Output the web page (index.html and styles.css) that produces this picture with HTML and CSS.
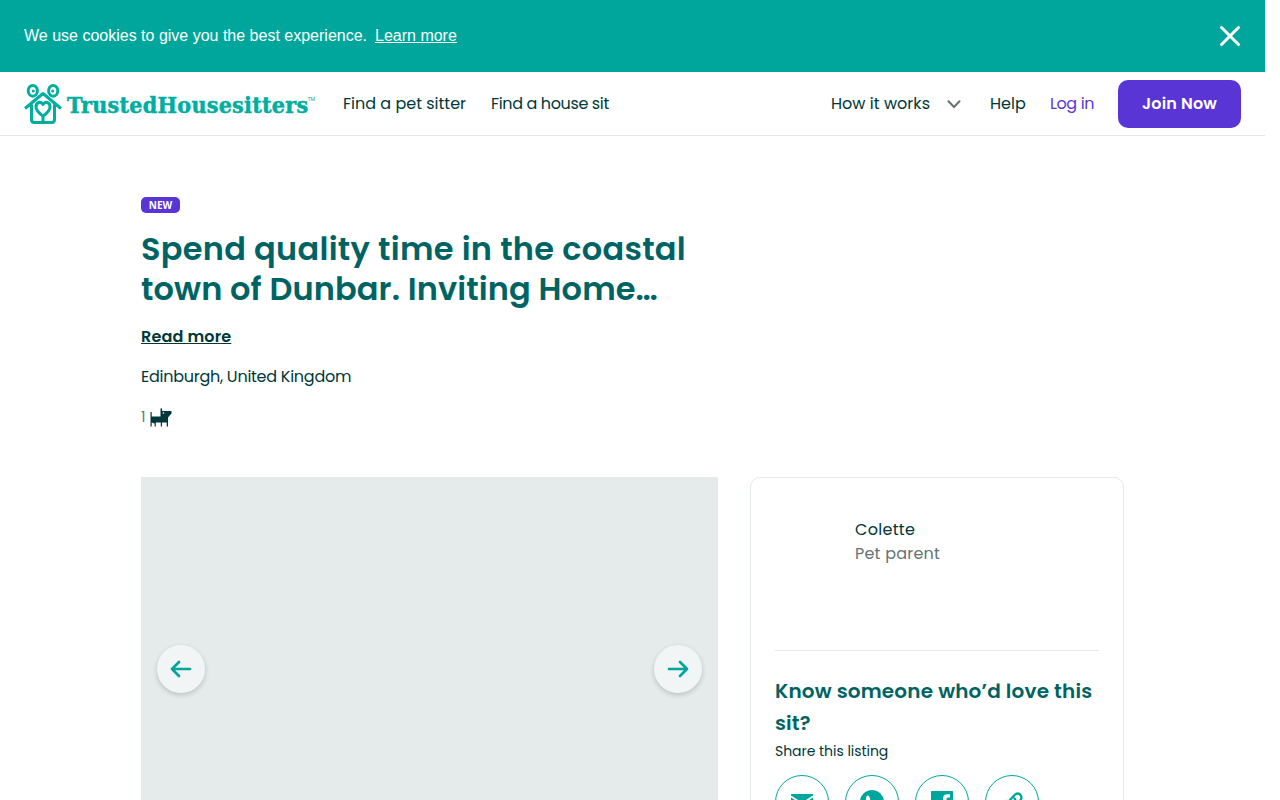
FILE: index.html
```html
<!DOCTYPE html>
<html lang="en">
<head>
<meta charset="utf-8">
<title>TrustedHousesitters</title>
<link rel="stylesheet" href="styles.css">
</head>
<body>
<div class="page">
  <div class="cookie">
    <p class="cookie-text">We use cookies to give you the best experience.<a class="cookie-link">Learn more</a></p>
    <svg class="cookie-close" width="22" height="22" viewBox="0 0 22 22"><path d="M2.5 2.5l17 17M19.5 2.5l-17 17"/></svg>
  </div>
  <header class="header">
    <div class="logo">
      <svg class="logo-mark" width="40" height="42" viewBox="0 0 40 42">
        <ellipse cx="9.800" cy="8.800" rx="4.600" ry="5.400"/><ellipse cx="30.200" cy="8.800" rx="4.600" ry="5.400"/>
        <path d="M2 26.500L20 11.500 38 26.500M8.500 22.500V37.500q0 3 3 3H28.500q3 0 3-3V22.500M20 40V34M20 34C15.500 31 13 28 13 24.800C13 20 18 19 20 22.500C22 19 27 20 27 24.800C27 28 24.500 31 20 34Z"/>
        <circle class="logo-eye" cx="10.300" cy="9" r="1.500"/><circle class="logo-eye" cx="29.700" cy="9" r="1.500"/>
      </svg>
      <span class="logo-name">TrustedHousesitters</span><span class="logo-tm">TM</span>
    </div>
    <nav class="nav nav-left"><a class="t-sitter">Find a pet sitter</a><a class="t-house">Find a house sit</a></nav>
    <nav class="nav nav-right">
      <a class="t-how">How it works</a>
      <svg class="chevron" width="14" height="9" viewBox="0 0 14 9"><path d="M1.500 1.300L7 7 12.500 1.300"/></svg>
      <a class="t-help">Help</a><a class="t-login">Log in</a>
      <button class="join"><span>Join Now</span></button>
    </nav>
  </header>
  <main class="main">
    <span class="badge">NEW</span>
    <h1 class="title"><span class="title-a">Spend quality time in the coastal</span><br><span class="title-b">town of Dunbar. Inviting Home…</span></h1>
    <a class="more">Read more</a>
    <p class="place">Edinburgh, United Kingdom</p>
    <div class="pets"><span>1</span>
      <svg width="22" height="20" viewBox="0 0 22 20"><path d="M.5 4H1.700V8.500H10.500V.5L11.500 0 12.300 3H21.500V5.500L18 9.500V18.500H16.700V14.500H12V18.500H10.800V14.500H5.800V18.500H4.600V15.500L1.700 14.500V18.500H.5Z"/><circle class="pet-eye" cx="13.500" cy="5" r=".8"/></svg>
    </div>
    <div class="columns">
      <section class="gallery">
        <button class="arrow"><svg width="22" height="18" viewBox="0 0 22 18"><path d="M20 9H2M9 2L2 9L9 16"/></svg></button>
        <button class="arrow"><svg width="22" height="18" viewBox="0 0 22 18"><path d="M2 9H20M13 2L20 9L13 16"/></svg></button>
      </section>
      <aside class="card">
        <div class="owner"><span class="owner-name">Colette</span><span class="owner-role">Pet parent</span></div>
        <h2 class="share-title"><span>Know someone who’d love this</span><br><span class="sit">sit?</span></h2>
        <p class="share-text">Share this listing</p>
        <div class="shares">
          <a class="share"><svg width="24" height="24" viewBox="0 0 24 24"><path d="M1 4H23V5.500L12 12.500 1 5.500ZM1 7.500L12 14.500 23 7.500V22H1Z"/></svg></a>
          <a class="share"><svg width="24" height="24" viewBox="0 0 24 24"><circle cx="12" cy="12" r="12"/><path class="cut" d="M6 8.500q0-3 2-3 1 0 1.500 1.500L10.300 9.500 9 11.500q1.500 3 4.500 4.500l2-1.500 3 1.500q0 4-4.500 3Q7 16.500 6 8.500Z"/></svg></a>
          <a class="share"><svg width="24" height="24" viewBox="0 0 24 24"><rect x="1" y="1" width="22" height="22" rx=".6"/><path class="cut" d="M20 4.200V7.500H18Q16.500 7.500 16.500 9V12H20L19.500 15.500H16.500V23H13V15.500H10.500V12H13V8.500Q13 4.200 17.500 4.200Z"/></svg></a>
          <a class="share"><svg class="link" width="24" height="24" viewBox="0 0 24 24"><path d="M9.500 15.500Q7.500 12.500 10 10L14.500 5Q17.500 2.300 20.300 4.700Q22.500 7.500 20.500 10L17 13.500M14.500 8.500Q16.500 11.500 14 14L8.500 19.500Q6 21.500 3.500 19Q1.500 16.500 3.500 14L6.500 11"/></svg></a>
        </div>
      </aside>
    </div>
  </main>
</div>
</body>
</html>
```
FILE: styles.css
```css
* { box-sizing: border-box; }
html, body { margin: 0; height: 800px; overflow: hidden; background: #fff; }
body { font-family: Poppins, Inter, "Open Sans", sans-serif; font-size: 16px; line-height: 24px; color: #003738; }
p, h1, h2 { margin: 0; }
button { border: 0; padding: 0; font: inherit; }
svg { display: block; flex: none; }
a, span { white-space: nowrap; }
.page { width: 1265px; height: 800px; overflow: hidden; }
.cookie { height: 72px; background: #00a69c; padding: 0 24px; display: flex; align-items: center; justify-content: space-between; color: #fff; font-family: "Liberation Sans", Arial, sans-serif; }
.cookie-link { text-decoration: underline; margin-left: 8px; }
.cookie-close { fill: none; stroke: #fff; stroke-width: 3; stroke-linecap: round; }
.header { height: 64px; border-bottom: 1px solid #e2e5e5; padding: 0 24px; display: flex; align-items: center; }
.logo { display: flex; align-items: center; width: 319px; color: #00ae9f; }
.logo-mark { fill: none; stroke: #00ae9f; stroke-width: 3; stroke-linejoin: round; margin: -2px 0 0 -1px; }
.logo-mark .logo-eye { fill: #00ae9f; stroke: none; }
.logo-name { font: bold 23px/30px "DejaVu Serif Condensed", "DejaVu Serif", serif; font-stretch: condensed; letter-spacing: .28px; -webkit-text-stroke: .5px #00ae9f; margin: 2px 0 0 4px; }
.logo-tm { font: 5px/6px Inter, sans-serif; margin: -10px 0 0 -1px; }
.nav { display: flex; align-items: center; }
.nav-left { gap: 25px; }
.nav-right { margin-left: auto; }
.t-sitter { width: 123px; }
.t-house { letter-spacing: -.37px; }
.t-how { width: 99px; letter-spacing: .03px; }
.chevron { margin: 2px 29px 0 17px; fill: none; stroke: #647474; stroke-width: 2; stroke-linecap: round; }
.t-help { width: 36px; }
.t-login { width: 44px; margin: 0 24px; color: #5a35d5; letter-spacing: -.4px; }
.join { width: 123px; height: 48px; border-radius: 10px; background: #5a35d5; color: #fff; font-weight: 600; letter-spacing: .15px; }
.main { width: 983px; margin: 61px 0 0 141px; display: flex; flex-direction: column; align-items: flex-start; }
.badge { width: 39px; height: 16px; border-radius: 5px; background: #5a35d5; color: #fff; font: bold 10px/16px "Open Sans", sans-serif; text-align: center; }
.title { margin-top: 16px; font-size: 32px; line-height: 40px; font-weight: 600; color: #006363; }
.title-a { letter-spacing: .28px; }
.title-b { letter-spacing: .1px; }
.more { margin-top: 16px; font-weight: 600; text-decoration: underline; letter-spacing: .15px; }
.place { margin-top: 16px; letter-spacing: -.26px; }
.pets { height: 24px; margin-top: 16px; display: flex; align-items: center; gap: 5px; font-size: 14px; color: #647474; }
.pets svg { fill: #003738; margin-top: 2px; }
.pets .pet-eye { fill: #fff; }
.columns { margin-top: 48px; width: 983px; display: flex; gap: 32px; }
.gallery { width: 577px; height: 384px; background: #e4ebea; padding: 0 16px; display: flex; align-items: center; justify-content: space-between; }
.arrow { width: 48px; height: 48px; border-radius: 50%; background: #f1f5f6; box-shadow: 0 2px 5px rgba(0, 40, 40, .2); display: flex; align-items: center; justify-content: center; }
.arrow svg { fill: none; stroke: #00a69c; stroke-width: 2.700; stroke-linecap: round; stroke-linejoin: round; }
.card { width: 374px; height: 450px; border: 1px solid #e4eaea; border-radius: 10px; padding: 0 24px; }
.owner { height: 173px; border-bottom: 1px solid #e4eaea; padding: 40px 0 0 80px; display: flex; flex-direction: column; }
.owner-name { letter-spacing: .3px; }
.owner-role { color: #647474; letter-spacing: .22px; }
.share-title { margin-top: 24px; font-size: 20px; line-height: 32px; font-weight: 600; color: #006363; letter-spacing: .17px; }
.share-text { font-size: 14px; line-height: 24px; letter-spacing: -.04px; }
.shares { margin-top: 12px; display: flex; gap: 16px; }
.share { width: 54px; height: 54px; border: 1px solid #00a69c; border-radius: 50%; display: flex; align-items: center; justify-content: center; }
.share svg { fill: #00a69c; }
.share .cut { fill: #fff; }
.share .link { fill: none; stroke: #00a69c; stroke-width: 2.300; stroke-linecap: round; }
```
